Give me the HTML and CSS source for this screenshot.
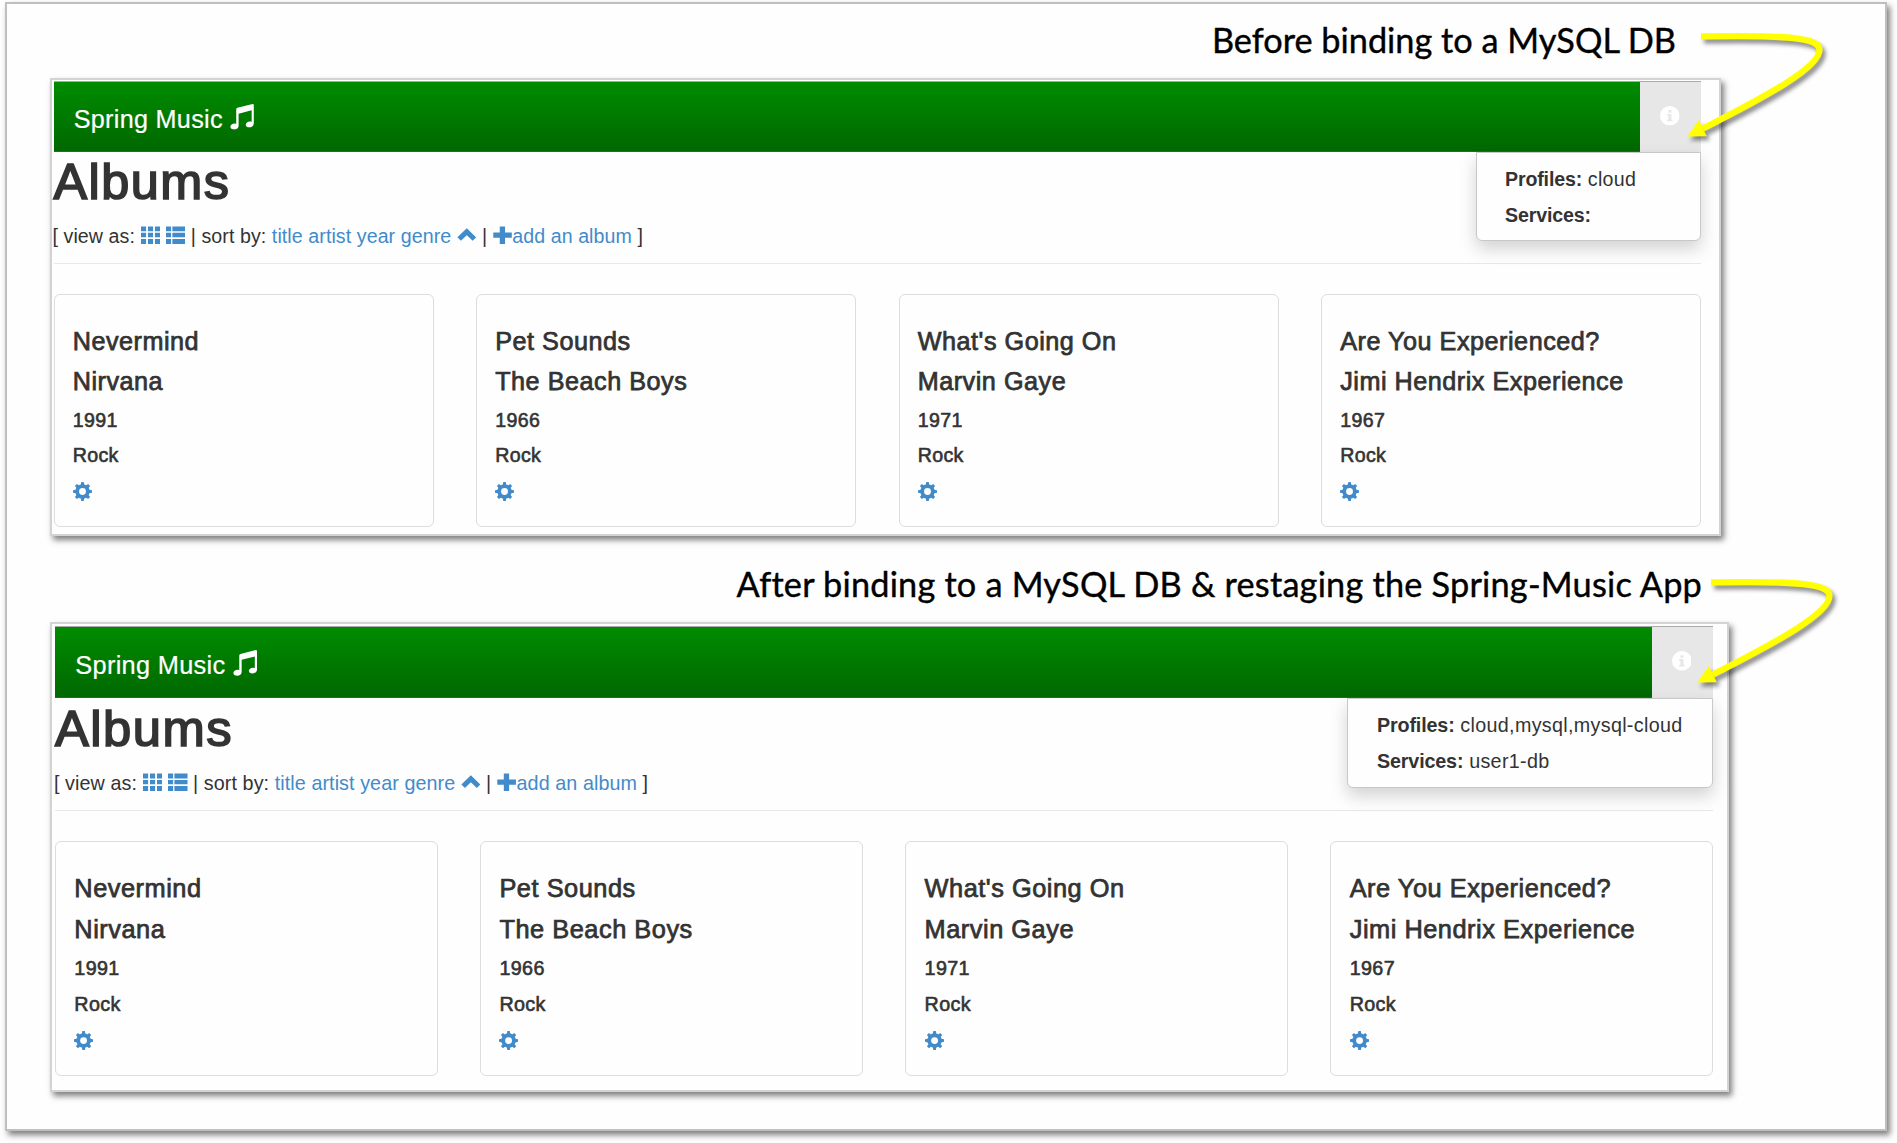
FILE: index.html
```html
<!DOCTYPE html>
<html lang="en">
<head>
<meta charset="utf-8">
<title>Spring Music</title>
<link rel="stylesheet" href="styles.css">
</head>
<body>
<svg class="defs" width="0" height="0" aria-hidden="true">
  <symbol id="music" viewBox="0 0 24 26">
    <path d="M6.200 5.400Q6.300 4.200 7.400 3.900L22.800.100Q24 0 24 1.200V19.600C24 22 21.800 23.600 19.400 23.600 17.200 23.600 15.800 22.400 15.800 20.900 15.800 19 17.800 17.700 20 17.700 20.700 17.700 21.300 17.800 21.800 18V6.400L8.600 9.800V22C8.600 24.200 6.700 25.800 4.200 25.800 1.900 25.800.300 24.700.300 23 .300 21.100 2.300 19.800 4.500 19.800 5.200 19.800 5.800 20 6.200 20.200Z"/>
  </symbol>
  <symbol id="info" viewBox="0 0 20 20">
    <path fill-rule="evenodd" d="M10 0a10 10 0 1 1 0 20 10 10 0 0 1 0-20ZM8.500 4.200V6.800H11.600V4.200ZM7.200 8.200V9.800H8.500V14H7.200V15.600H12.900V14H11.600V8.200Z"/>
  </symbol>
  <symbol id="grid" viewBox="0 0 20 20">
    <path d="M0 1.500h5.200v5H0zM7.100 1.500h5.200v5H7.100zM14.200 1.500h5.200v5h-5.200zM0 8h5.200v4.500H0zM7.100 8h5.200v4.500H7.100zM14.200 8h5.200v4.500h-5.200zM0 14.300h5.200v5H0zM7.100 14.300h5.200v5H7.100zM14.200 14.300h5.200v5h-5.200z"/>
  </symbol>
  <symbol id="list" viewBox="0 0 20 20">
    <path d="M0 1.500h5.200v5H0zM6.500 1.500h13.500v5H6.500zM0 8h5.200v4.500H0zM6.500 8h13.500v4.500H6.500zM0 14.300h5.200v5H0zM6.500 14.300h13.500v5H6.500z"/>
  </symbol>
  <symbol id="chevron" viewBox="0 0 20 20">
    <path d="M10 3.200 19.600 12.600 16 16.200 10 10.400 4 16.200.400 12.600Z"/>
  </symbol>
  <symbol id="plus" viewBox="0 0 20 20">
    <path d="M6.900 1.500h5.400v6.200h6.900v5.200h-6.900v6.400H6.900v-6.400H.300V7.700h6.600z"/>
  </symbol>
  <symbol id="cog" viewBox="-10 -10 20 20">
    <circle r="5.600" fill="none" stroke="currentColor" stroke-width="4"/>
    <path d="M-1.900-6.500-1.300-10H1.300L1.900-6.500ZM-1.900 6.500-1.300 10H1.300L1.900 6.500ZM-6.500-1.900-10-1.300V1.300L-6.500 1.900ZM6.500-1.900 10-1.300V1.300L6.500 1.900Z"/>
    <path transform="rotate(45)" d="M-1.900-6.500-1.500-9.800H1.500L1.900-6.500ZM-1.900 6.500-1.500 9.800H1.500L1.900 6.500ZM-6.500-1.900-9.800-1.500V1.500L-6.500 1.900ZM6.500-1.900 9.800-1.500V1.500L6.500 1.900Z"/>
  </symbol>
  <symbol id="arrow" viewBox="0 0 150 120">
    <path d="M16 11.400C105 9.800 134.500 13 134.500 25 134.500 42 84 70 18 103.500" fill="none" stroke="#ff0" stroke-width="6.300"/>
    <path d="M2.300 111.600 13.800 95 21.800 111.300Z" fill="#ff0"/>
  </symbol>
</svg>

<main class="slide">
  <section class="step step-before">
    <h2 class="caption"><span>Before binding to a MySQL DB</span></h2>
    <div class="shot">
      <header class="navbar">
        <div class="brand">Spring Music <svg class="note"><use href="#music"/></svg></div>
        <div class="info"><svg class="icon"><use href="#info"/></svg>
          <div class="menu"><p><b>Profiles:</b> cloud</p><p><b>Services:</b></p></div>
        </div>
      </header>
      <h1>Albums</h1>
      <div class="tools">[ view as: <a><svg class="icon"><use href="#grid"/></svg></a> <a><svg class="icon"><use href="#list"/></svg></a> | sort by: <a>title</a> <a>artist</a> <a>year</a> <a>genre</a> <a><svg class="icon"><use href="#chevron"/></svg></a> | <a><svg class="icon"><use href="#plus"/></svg>add an album</a> ]</div>
      <hr>
      <div class="albums">
        <article class="card"><h4>Nevermind</h4><h4>Nirvana</h4><h5>1991</h5><h5>Rock</h5><a><svg class="cog"><use href="#cog"/></svg></a></article>
        <article class="card"><h4>Pet Sounds</h4><h4>The Beach Boys</h4><h5>1966</h5><h5>Rock</h5><a><svg class="cog"><use href="#cog"/></svg></a></article>
        <article class="card"><h4>What's Going On</h4><h4>Marvin Gaye</h4><h5>1971</h5><h5>Rock</h5><a><svg class="cog"><use href="#cog"/></svg></a></article>
        <article class="card"><h4>Are You Experienced?</h4><h4>Jimi Hendrix Experience</h4><h5>1967</h5><h5>Rock</h5><a><svg class="cog"><use href="#cog"/></svg></a></article>
      </div>
    </div>
    <svg class="arrow"><use href="#arrow"/></svg>
  </section>

  <section class="step step-after">
    <h2 class="caption"><span>After binding to a MySQL DB &amp; restaging the Spring-Music App</span></h2>
    <div class="shot">
      <header class="navbar">
        <div class="brand">Spring Music <svg class="note"><use href="#music"/></svg></div>
        <div class="info"><svg class="icon"><use href="#info"/></svg>
          <div class="menu"><p><b>Profiles:</b> cloud,mysql,mysql-cloud</p><p><b>Services:</b> user1-db</p></div>
        </div>
      </header>
      <h1>Albums</h1>
      <div class="tools">[ view as: <a><svg class="icon"><use href="#grid"/></svg></a> <a><svg class="icon"><use href="#list"/></svg></a> | sort by: <a>title</a> <a>artist</a> <a>year</a> <a>genre</a> <a><svg class="icon"><use href="#chevron"/></svg></a> | <a><svg class="icon"><use href="#plus"/></svg>add an album</a> ]</div>
      <hr>
      <div class="albums">
        <article class="card"><h4>Nevermind</h4><h4>Nirvana</h4><h5>1991</h5><h5>Rock</h5><a><svg class="cog"><use href="#cog"/></svg></a></article>
        <article class="card"><h4>Pet Sounds</h4><h4>The Beach Boys</h4><h5>1966</h5><h5>Rock</h5><a><svg class="cog"><use href="#cog"/></svg></a></article>
        <article class="card"><h4>What's Going On</h4><h4>Marvin Gaye</h4><h5>1971</h5><h5>Rock</h5><a><svg class="cog"><use href="#cog"/></svg></a></article>
        <article class="card"><h4>Are You Experienced?</h4><h4>Jimi Hendrix Experience</h4><h5>1967</h5><h5>Rock</h5><a><svg class="cog"><use href="#cog"/></svg></a></article>
      </div>
    </div>
    <svg class="arrow"><use href="#arrow"/></svg>
  </section>
</main>
</body>
</html>
```

FILE: styles.css
```css
* { box-sizing: border-box; }

body {
  margin: 0;
  padding: 2px 10px 12px 5px;
  height: 1143px;
  overflow: hidden;
  background: #fefefe;
  color: #333;
  font-family: "Liberation Sans", Arial, sans-serif;
}

h1, h2, h4, h5, p { margin: 0; font-weight: 400; }
svg { fill: currentColor; }
a { color: #428bca; }
.defs { position: absolute; }

.slide {
  width: 1882px;
  height: 1129px;
  border: 2px solid #bfbfbf;
  background: #fefefe;
  box-shadow: 3px 4px 6px rgba(0, 0, 0, .5);
  padding-left: 43px;
}

.step { position: relative; }
.step-before { --u: 1.4px; height: 532px; }
.step-after { --u: 1.409px; padding-top: 12px; }

.caption {
  height: 74px;
  color: #000;
  font: 400 34.3px/40px Lato, "Open Sans", sans-serif;
  white-space: nowrap;
  text-align: right;
  -webkit-text-stroke: .400px #000;
}
.step-before .caption { width: 1626px; padding-top: 15.500px; }
.step-after .caption { width: 1652px; padding-top: 15.700px; letter-spacing: .200px; }

.shot {
  border: 2px solid #d3d3d3;
  background: #fefefe;
  box-shadow: 3px 4px 6px rgba(0, 0, 0, .5);
}
.step-before .shot { width: 1671px; height: 458px; padding: 1px 18px 0 1.500px; }
.step-after .shot { width: 1679px; height: 470px; padding: 2px 14px 0 3px; }

.navbar {
  display: flex;
  justify-content: space-between;
  height: calc(var(--u) * 50.600);
  border-top: 1px solid #aaa;
  border-bottom: 1px solid #127a12;
  background: linear-gradient(#008c00, #006800);
  color: #fff;
}
.step-after .navbar { height: 72px; }
.brand {
  padding: 22px 0 0 calc(var(--u) * 14.400);
  font-size: calc(var(--u) * 18);
  line-height: calc(var(--u) * 20);
  letter-spacing: .300px;
  white-space: nowrap;
  -webkit-text-stroke: .200px #fff;
}
.step-after .brand { padding-top: 23px; }
.note { width: calc(var(--u) * 17.100); height: calc(var(--u) * 18.400); vertical-align: -1.500px; }
.info {
  position: relative;
  width: calc(var(--u) * 43.600);
  height: calc(100% + 1px);
  padding: 24px 0 0 calc(var(--u) * 14.300);
  background: #e7e7e7;
  font-size: calc(var(--u) * 14);
}
.info .icon { display: block; }
.icon { width: 1em; height: 1em; vertical-align: -.1em; }

.menu {
  position: absolute;
  top: 100%;
  right: 0;
  height: calc(var(--u) * 63.600);
  padding: calc(var(--u) * 8.400) 0 0 calc(var(--u) * 20);
  border: 1px solid #c8c8c8;
  border-radius: 0 0 6px 6px;
  background: #fefefe;
  box-shadow: 0 8px 17px rgba(0, 0, 0, .175);
  color: #333;
  white-space: nowrap;
  letter-spacing: .320px;
}
.step-before .menu { width: 225px; }
.step-after .menu { width: 366.500px; padding-left: 29.500px; }
.menu p { line-height: calc(var(--u) * 20); margin-bottom: calc(var(--u) * 5.900); }
.menu b { letter-spacing: -.150px; }

h1 {
  margin-top: calc(var(--u) * 1.200);
  font-size: calc(var(--u) * 36);
  line-height: calc(var(--u) * 39.600);
  letter-spacing: 1.500px;
  -webkit-text-stroke: 1.700px #333;
}
.step-after h1 { margin-top: 2.700px; }
.tools {
  margin: calc(var(--u) * 9.300) 0 0 -1px;
  font-size: calc(var(--u) * 14);
  line-height: calc(var(--u) * 20);
  letter-spacing: .080px;
  white-space: nowrap;
}
.step-after .tools { margin-top: 12.600px; }
hr { margin: calc(var(--u) * 9) 0 calc(var(--u) * 21.400); border: 0; border-top: 1px solid #e8e8e8; }

.albums { display: grid; grid-template-columns: repeat(4, 1fr); gap: 42.500px; }
.card {
  height: calc(var(--u) * 166.600);
  padding: calc(var(--u) * 22.900) 0 0 calc(var(--u) * 13);
  border: 1px solid #ddd;
  border-radius: 6px;
}
h4 {
  margin-bottom: calc(var(--u) * 8.900);
  font-size: calc(var(--u) * 18);
  line-height: calc(var(--u) * 20);
  letter-spacing: .520px;
  -webkit-text-stroke: .750px #333;
}
h5 {
  margin: calc(var(--u) * 9.400) 0 0;
  font-size: calc(var(--u) * 14);
  line-height: calc(var(--u) * 15.700);
  letter-spacing: .350px;
  -webkit-text-stroke: .600px #333;
}
h4 + h5 { margin-top: calc(var(--u) * 10); }
.cog { display: block; width: calc(var(--u) * 13.600); height: calc(var(--u) * 13.600); margin-top: calc(var(--u) * 11.300); }

.arrow {
  position: absolute;
  width: 150px;
  height: 120px;
  left: 1635.400px;
  top: 21px;
  filter: drop-shadow(3px 4px 2px rgba(0, 0, 0, .45));
}
.step-after .arrow { left: 1645.200px; top: 35.200px; }
```
